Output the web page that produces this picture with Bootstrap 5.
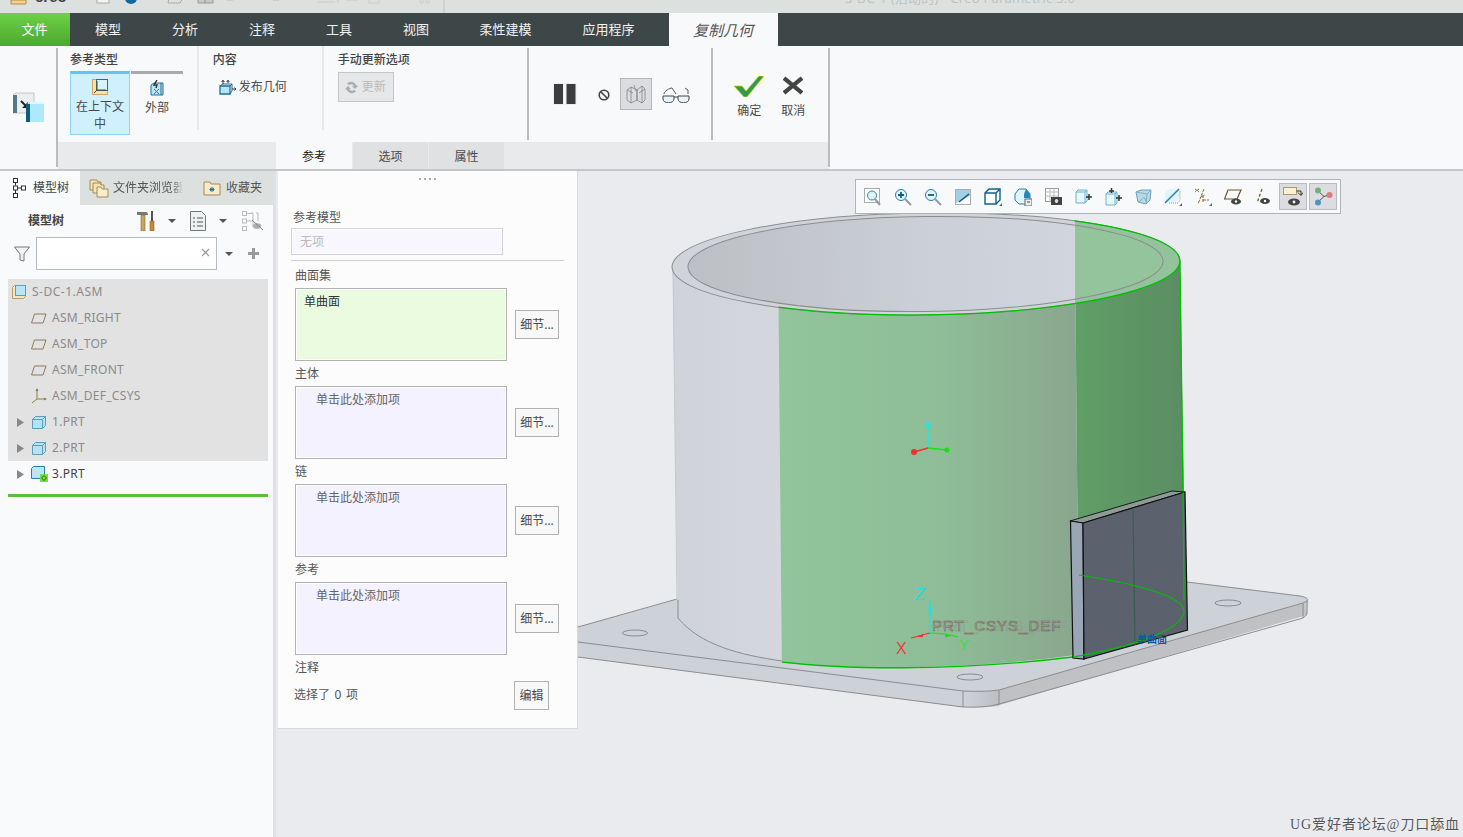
<!doctype html>
<html lang="zh">
<head>
<meta charset="utf-8">
<title>Creo</title>
<link rel="stylesheet" href="https://cdn.jsdelivr.net/npm/bootstrap@5.3.0/dist/css/bootstrap.min.css">
<style>
html,body{height:100%;}
body{width:1463px;height:837px;overflow:hidden;background:#e9ebef;font:12px/1.2 "Noto Sans","Noto Sans CJK SC",sans-serif;color:#4a4a4a;}
svg{display:block;flex:none;}
.titlebar{height:13px;background:#dce1e0;overflow:hidden;}
.tabstrip{height:33px;background:#3e4748;color:#f2f2f2;font-size:13px;}
.tb-item{width:77px;height:33px;display:flex;align-items:center;justify-content:center;padding:1px 1px 0 0;}
.tb-file{width:70px;background:linear-gradient(#6bd246,#4ea82f);color:#fff;}
.tb-w102{width:102px;}
.tb-w104{width:104px;margin-right:8px;}
.tb-ctx{width:109px;background:#f8f9fb;color:#555;font-style:italic;font-size:15px;}
.ribbon{height:125px;background:#f8f9fb;border-bottom:2px solid #c4c7c8;}
.rb-left{width:58px;margin-top:2px;margin-bottom:2px;border-right:2px solid #b9bdbe;padding:44px 0 0 13px;}
.rb-mid{width:771px;}
.rb-top{height:96px;}
.rb-bottom{height:27px;background:#e9eaec;padding-left:218px;}
.rb-right{width:2px;margin:2px 0 2px -1px;background:#b9bdbe;}
.rb-tab{width:75px;height:27px;margin-right:1px;background:#dfe1e3;display:flex;align-items:center;justify-content:center;padding-top:4px;}
.rb-tab-on{width:76px;background:#f8f9fb;color:#222;}
.grp{position:relative;height:96px;}
.grp-a{width:141px;padding:6px 0 0 12px;}
.grp-b{width:125px;padding:6px 0 0 14px;}
.grp-c{width:206px;padding:4px 0 0 14px;}
.grp-d{width:184px;padding:35px 0 0 24px;}
.grp-e{width:116px;padding:30px 0 0 21px;}
.sep-light{border-right:2px solid #e6e8ea;height:84px;}
.sep-dark{border-right:2px solid #b9bdbe;height:92px;margin-top:2px;}
.grp-title{font-weight:500;color:#444;height:17px;line-height:15px;white-space:nowrap;}
.rtype{height:64px;width:60px;margin-top:2px;text-align:center;border-top:3px solid #aaa;}
.rtype-on{background:#d0f0fe;border:1px solid #8fd3f5;border-top:3px solid #62c4f2;margin-right:1px;line-height:17px;padding-top:5px;}
.rtype-off{width:52px;padding-top:6px;line-height:17px;}
.rtype svg{margin:0 auto 3px;}
.pub{margin:11px 0 0 6px;gap:3px;}
.upd{margin-top:3px;width:56px;height:30px;background:#e6e7e9;border:1px solid #c4c6c8;color:#bbb;gap:3px;padding-left:5px;}
.act-btn{width:44px;text-align:center;}
.act-btn svg{margin:0 auto;}
.act-btn div{margin-top:7px;}
.press{width:32px;height:32px;background:#dcdde0;border:1px solid #b4b6b8;display:flex;align-items:center;justify-content:center;margin:-5px 11px 0 10px;}
.wsp{height:666px;}
.side{width:273px;background:#f8fafb;}
.side-edge{width:3px;background:#dfe1e4;}
.side-tabs{height:34px;background:#dce1e0;}
.st{height:34px;display:flex;align-items:center;white-space:nowrap;overflow:hidden;}
.st-on{width:80px;background:#f8fafb;padding-left:12px;gap:6px;}
.st-b{width:113px;padding-left:9px;gap:4px;color:#555;}
.st-c{width:80px;padding-left:10px;gap:5px;color:#555;}
.st-fade{width:70px;overflow:hidden;-webkit-mask-image:linear-gradient(90deg,#000 85%,transparent);mask-image:linear-gradient(90deg,#000 85%,transparent);}
.tool-row{height:32px;padding-left:28px;}
.filter-row{height:33px;padding-left:14px;}
.flt-wrap{position:relative;width:181px;height:33px;margin-left:6px;}
.flt-input{width:181px;height:33px;border:1px solid #b4bcbd;border-radius:0;background:#fff;padding:0;}
.flt-x{position:absolute;right:7px;top:11px;}
.tree{margin:9px 5px 0 8px;border-radius:0;width:260px;}
.tree-row{height:26px;border:0;border-radius:0!important;padding:0 0 0 9px;display:flex;align-items:center;background:#e2e2e2;color:#8a8a8a;letter-spacing:.3px;}
.tree-row.live{background:transparent;color:#444;}
.tree-arrow{width:15px;flex:none;display:flex;align-items:center;}
.tree-name{margin-left:6px;white-space:nowrap;}
.tree-kid{padding-left:23px;}
.tree-end{height:3px;margin:7px 5px 0 8px;width:260px;background:#5bbf3a;}
.pane{width:300px;height:558px;margin-left:2px;background:#fcfcfc;border-right:1px solid #d8d9da;border-bottom:1px solid #d8d9da;padding:0 0 0 17px;flex:none;}
.pane-dots{height:37px;padding:7px 0 0 124px;}
.pane-lab{height:18px;line-height:20px;color:#555;}
.pane-none{margin:2px 0 0 -4px;width:212px;height:27px;background:#f8f6fe;border:1px solid #d3d3d3;box-shadow:inset 0 0 0 1px #fff;color:#bbb;padding:0 8px;line-height:25px;}
.pane-rule{height:1px;background:#cfcfcf;margin:5px 13px 5px -4px;}
.coll-row{height:73px;}
.coll{width:212px;height:73px;border:1px solid #b2b2b2;box-shadow:inset 0 0 0 1px #fff;background:#f4f2ff;padding:6px 20px;color:#666;}
.coll-sel{background:#ebfbdf;padding-left:8px;color:#333;}
.dtl{width:44px;height:29px;margin-left:8px;border:1px solid #b2b2b2;border-radius:0;background:#f8f8f8;color:#4a4a4a;font-size:12px;padding:0;--bs-btn-hover-bg:#f8f8f8;}
.dtl-s{width:35px;}
.pane-gap{margin-top:3px;margin-bottom:4px;}
.pane-foot{margin-top:5px;height:29px;width:255px;}
.foot-text{width:220px;color:#555;margin-left:-1px;word-spacing:1.5px;}
.view{width:885px;height:666px;position:relative;overflow:hidden;}
.vtools{position:absolute;left:277px;top:8px;width:486px;height:35px;background:#f8f9fb;border:1px solid #afb4b6;padding-left:2px;}
.vt{width:30px;height:33px;display:flex;align-items:center;justify-content:center;}
.vt-on{width:28px;height:27px;margin-left:1px;margin-right:1px;background:#dcdde0;border:1px solid #bbb;}
.wmark{position:absolute;right:3px;bottom:3px;font-family:"Liberation Serif","Noto Sans CJK SC",serif;font-size:14px;letter-spacing:.9px;color:#555;white-space:nowrap;text-shadow:0 0 1px #fff;}
</style>
</head>
<body>
<div class="titlebar">
<svg width="1463" height="13" viewBox="0 0 1463 13">
<path d="M11 0h15v4h-15z" fill="#f3d28e" stroke="#b08a40"/>
<text x="35" y="2" font-family="Liberation Sans" font-size="15" font-weight="bold" fill="#444">creo</text>
<rect x="97" y="-6" width="12" height="9" fill="#f2f3f3" stroke="#aaa"/>
<circle cx="131" cy="-2" r="6" fill="#0f6aa0"/>
<path d="M169-2h14l-3 5h-12z" fill="none" stroke="#aaa"/>
<path d="M198-4h15v7h-15zM205-4v7" fill="#c8c8c8" stroke="#999"/>
<path d="M227 0h6l3-3M267 0l5-3M273 0h6" fill="none" stroke="#bbb"/>
<path d="M318 2h17M338-2v5" stroke="#ccc" fill="none"/>
<path d="M346-3h10l2 3h-12zM369-2h10v5h-10z" fill="none" stroke="#ccc"/>
<path d="M420-3h3v6h-3zM426-3h3v6h-3z" fill="#ddd" stroke="#ccc"/>
<path d="M444 0v13" stroke="#bfc4c4"/>
<text x="845" y="3" textLength="230" font-family="Noto Sans,Noto Sans CJK SC" font-size="13" fill="#bdc3c3">S-DC-1 (活动的) - Creo Parametric 3.0</text>
</svg>
</div>
<ul class="nav tabstrip flex-nowrap">
<li class="tb-item tb-file">文件</li><li class="tb-item">模型</li><li class="tb-item">分析</li><li class="tb-item">注释</li><li class="tb-item">工具</li><li class="tb-item">视图</li><li class="tb-item tb-w102">柔性建模</li><li class="tb-item tb-w104">应用程序</li><li class="tb-item tb-ctx">复制几何</li>
</ul>
<div class="ribbon d-flex">
<div class="rb-left">
<svg width="32" height="32" viewBox="0 0 32 32"><path d="M0 3l3-2h18v20H0z" fill="#eceef0" stroke="#c4c6c8"/><rect x="0" y="3" width="4" height="18" fill="#56788f"/><path d="M8 9l5 5" stroke="#222" stroke-width="2" fill="none"/><path d="M15 16H9l6-6z" fill="#222"/><path d="M14 12l3-2h14v20H14z" fill="#aee8fb"/><path d="M17 10h14v2H17z" fill="#dff7fe"/><rect x="13" y="12" width="4" height="18" fill="#0a5c85"/></svg>
</div>
<div class="rb-mid">
<div class="rb-top d-flex">
<div class="grp grp-a sep-light">
<div class="grp-title">参考类型</div>
<div class="d-flex">
<div class="rtype rtype-on"><svg width="16" height="16" viewBox="0 0 16 16"><rect x=".5" y=".5" width="15" height="15" fill="#fbe0a8" stroke="#c9a86a"/><rect x="4.500" y=".5" width="11" height="11" fill="#d8f4fd" stroke="#2a6f93"/><path d="M5 11V2M5 11h9M5 11l-3 3" stroke="#5c4a20" fill="none"/></svg>在上下文中</div>
<div class="rtype rtype-off"><svg width="14" height="16" viewBox="0 0 14 16"><path d="M1 5l3-2h9v12H1z" fill="#b8e4f4" stroke="#2a6f93"/><path d="M11 3v12" stroke="#2a6f93"/><path d="M7 0L4 5h3l-1 3" stroke="#333" fill="none" stroke-width="1.4"/><path d="M4 9l5 5M9 9l-5 5" stroke="#9a6a20"/></svg>外部</div>
</div>
</div>
<div class="grp grp-b sep-light">
<div class="grp-title">内容</div>
<div class="pub d-flex align-items-center"><svg width="17" height="15" viewBox="0 0 17 15"><path d="M1 6h10v8H1z" fill="#b4e6f8" stroke="#1f6f95" stroke-width="1.3"/><path d="M1 6l3-2h9l-2 2M13 4v7l-2 3" fill="none" stroke="#1f6f95"/><path d="M4 4V0M2.500 2L4 .5 5.500 2M9 3V0M7.500 2L9 .5 10.500 2M13 9h4M15.500 7.500L17 9l-1.500 1.500" stroke="#333" fill="none"/></svg>发布几何</div>
</div>
<div class="grp grp-c sep-dark">
<div class="grp-title">手动更新选项</div>
<div class="upd d-flex align-items-center"><svg width="15" height="13" viewBox="0 0 15 13"><path d="M1 8l3-3 3 3H5c1 2 4 2 5 1l2 1c-2 3-7 3-9-1zM14 5l-3 3-3-3h2c-1-2-4-2-5-1L3 3c2-3 7-3 9 1z" fill="#a9adaf"/></svg>更新</div>
</div>
<div class="grp grp-d sep-dark d-flex align-items-center">
<svg width="24" height="22" viewBox="0 0 24 22" class="align-self-start mt-0"><rect x=".5" y=".5" width="10" height="21" fill="#3d3d3d" stroke="#eee"/><rect x="13" y=".5" width="10" height="21" fill="#3d3d3d" stroke="#eee"/></svg>
<svg width="12" height="12" viewBox="0 0 12 12" class="align-self-start" style="margin-left:21px;margin-top:6px"><circle cx="6" cy="6" r="4.800" fill="none" stroke="#444" stroke-width="1.600"/><path d="M2.500 2.500l7 7" stroke="#444" stroke-width="1.600"/></svg>
<div class="press align-self-start"><svg width="20" height="20" viewBox="0 0 20 20" fill="none" stroke="#777" stroke-width=".7"><path d="M1 6l4-3 6 3v10l-6 3-4-3zM11 6l5-4 3 3v11l-3 3-5-3zM5 3v16M16 2v17M8 1l2 6M1 6l6 3M19 5l-6 4"/></svg></div>
<svg width="28" height="16" viewBox="0 0 28 16" class="align-self-start" style="margin-top:4px;margin-left:-1px"><path d="M2 7C2 4 8 1 10 1l4 6M26 7V3l-3-2" fill="none" stroke="#555"/><path d="M1 9h11v3c0 5-11 5-11 0zM16 9h11v3c0 5-11 5-11 0z" fill="#e6f3f8" stroke="#444"/><path d="M12 10h4" stroke="#444"/></svg>
</div>
<div class="grp grp-e d-flex">
<div class="act-btn" style="margin-left:-7px"><svg width="30" height="21" viewBox="0 0 30 21"><path d="M0 10h8l4 5L25 0h5L13 21h-3z" fill="#2e9a52" stroke="#d6d200" stroke-width=".8"/></svg><div>确定</div></div>
<div class="act-btn"><svg width="20" height="21" viewBox="0 0 20 21"><path d="M1 2l18 15M19 2L1 17" stroke="#444" stroke-width="4.200"/></svg><div>取消</div></div>
</div>
</div>
<div class="rb-bottom d-flex">
<div class="rb-tab rb-tab-on">参考</div><div class="rb-tab">选项</div><div class="rb-tab">属性</div>
</div>
</div>
<div class="rb-right"></div>
</div>
<div class="wsp d-flex">
<aside class="side">
<div class="side-tabs d-flex">
<div class="st st-on"><svg width="15" height="20" viewBox="0 0 15 20" fill="#fff" stroke="#333"><rect x="1.500" y=".5" width="4" height="4"/><rect x="1.500" y="8" width="4" height="4"/><rect x="1.500" y="15.500" width="4" height="4"/><rect x="9.500" y="8" width="4" height="4"/><path d="M3.500 4.500v3M3.500 12v3.500M5.500 10h4" fill="none"/></svg><span style="color:#444">模型树</span></div>
<div class="st st-b"><svg width="20" height="20" viewBox="0 0 20 20"><path d="M1 2h7l1 2h3v8H1z" fill="#f6e3b5" stroke="#a48a55"/><path d="M4 5h7l1 2h3v8H4z" fill="#f6e3b5" stroke="#a48a55"/><path d="M8 9h4l1 2h6v8H8z" fill="#faecc8" stroke="#a48a55"/></svg><span class="st-fade">文件夹浏览器</span></div>
<div class="st st-c"><svg width="18" height="16" viewBox="0 0 18 16"><path d="M1 2h6l1 2h9v11H1z" fill="#faecc8" stroke="#a48a55"/><path d="M9 7v5M6.500 9.500h5M7 8l4 3M11 8l-4 3" stroke="#1f6f95"/></svg><span>收藏夹</span></div>
</div>
<div class="tool-row d-flex align-items-center">
<span class="fw-bold" style="width:109px;color:#444">模型树</span>
<svg width="20" height="20" viewBox="0 0 20 20"><path d="M0 1h9c1 0 2 1 2 3H0z" fill="#777"/><rect x="4" y="4" width="4" height="16" fill="#c9a45f" stroke="#8a6a30" stroke-width=".6"/><rect x="14" y="0" width="2" height="10" fill="#555"/><rect x="13" y="10" width="4" height="10" fill="#c98a2f" stroke="#7a5a20" stroke-width=".5"/></svg>
<svg width="8" height="4" viewBox="0 0 8 4" style="margin-left:11px"><path d="M0 0h8L4 4z" fill="#555"/></svg>
<svg width="16" height="20" viewBox="0 0 16 20" style="margin-left:14px"><path d="M.5.5h11l4 4v15H.5z" fill="#eef1f2" stroke="#777"/><path d="M3 7h2M7 7h6M3 11h2M7 11h6M3 15h2M7 15h6" stroke="#555"/></svg>
<svg width="8" height="4" viewBox="0 0 8 4" style="margin-left:13px"><path d="M0 0h8L4 4z" fill="#555"/></svg>
<svg width="22" height="20" viewBox="0 0 22 20" style="margin-left:15px" fill="none" stroke="#bbb"><rect x=".5" y=".5" width="4" height="4"/><rect x=".5" y="8" width="4" height="4"/><rect x=".5" y="15.500" width="4" height="4"/><path d="M4 2.500h6M4 10h6M9 2h2v14M14 2h2v8"/><ellipse cx="15" cy="15" rx="4" ry="2.500" fill="#aaa"/><path d="M10 9l11 10" stroke="#888"/></svg>
</div>
<div class="filter-row d-flex align-items-center">
<svg width="16" height="16" viewBox="0 0 16 16"><path d="M.5 1h15L10 8v7l-4-1V8z" fill="#f1f3f3" stroke="#777"/></svg>
<div class="flt-wrap"><input class="form-control flt-input" type="text" aria-label="filter"><svg class="flt-x" width="9" height="9" viewBox="0 0 9 9"><path d="M1 1l7 7M8 1L1 8" stroke="#999" stroke-width="1.200"/></svg></div>
<svg width="8" height="4" viewBox="0 0 8 4" style="margin-left:8px"><path d="M0 0h8L4 4z" fill="#555"/></svg>
<svg width="11" height="11" viewBox="0 0 11 11" style="margin-left:15px"><path d="M4 0h3v4h4v3H7v4H4V7H0V4h4z" fill="#999"/></svg>
</div>
<div class="list-group tree">
<div class="list-group-item tree-row" style="padding-left:4px"><svg width="14" height="14" viewBox="0 0 14 14"><path d="M.5 2.500l2-2h11v11l-2 2H.5z" fill="#f6e6c2" stroke="#b59c68"/><rect x="3.500" y=".5" width="10" height="10" fill="#b9e6f7" stroke="#5b9dbb"/></svg><span class="tree-name" style="letter-spacing:.5px">S-DC-1.ASM</span></div>
<div class="list-group-item tree-row tree-kid"><svg width="16" height="11" viewBox="0 0 16 11"><path d="M3.500 1H15l-3 9H.5z" fill="none" stroke="#8f7b5a"/></svg><span class="tree-name" style="margin-left:5px">ASM_RIGHT</span></div>
<div class="list-group-item tree-row tree-kid"><svg width="16" height="11" viewBox="0 0 16 11"><path d="M3.500 1H15l-3 9H.5z" fill="none" stroke="#8f7b5a"/></svg><span class="tree-name" style="margin-left:5px">ASM_TOP</span></div>
<div class="list-group-item tree-row tree-kid"><svg width="16" height="11" viewBox="0 0 16 11"><path d="M3.500 1H15l-3 9H.5z" fill="none" stroke="#8f7b5a"/></svg><span class="tree-name" style="margin-left:5px">ASM_FRONT</span></div>
<div class="list-group-item tree-row tree-kid"><svg width="16" height="16" viewBox="0 0 16 16"><path d="M6 1v10M6 11h9M6 11l-5 4" stroke="#8f7b5a" fill="none"/><path d="M6 0L4.500 3h3zM16 11l-3-1.500v3z" fill="#8f7b5a"/></svg><span class="tree-name" style="margin-left:5px">ASM_DEF_CSYS</span></div>
<div class="list-group-item tree-row"><div class="tree-arrow"><svg width="7" height="9" viewBox="0 0 7 9"><path d="M0 0l7 4.500L0 9z" fill="#888"/></svg></div><svg width="14" height="13" viewBox="0 0 14 13"><path d="M.5 3.500l3-3h10v9l-3 3H.5z" fill="#b5e3f5" stroke="#5b9dbb"/><path d="M.5 3.500h10v9M10.500 3.500l3-3" fill="none" stroke="#5b9dbb"/></svg><span class="tree-name">1.PRT</span></div>
<div class="list-group-item tree-row"><div class="tree-arrow"><svg width="7" height="9" viewBox="0 0 7 9"><path d="M0 0l7 4.500L0 9z" fill="#888"/></svg></div><svg width="14" height="13" viewBox="0 0 14 13"><path d="M.5 3.500l3-3h10v9l-3 3H.5z" fill="#b5e3f5" stroke="#5b9dbb"/><path d="M.5 3.500h10v9M10.500 3.500l3-3" fill="none" stroke="#5b9dbb"/></svg><span class="tree-name">2.PRT</span></div>
<div class="list-group-item tree-row live"><div class="tree-arrow"><svg width="7" height="9" viewBox="0 0 7 9"><path d="M0 0l7 4.500L0 9z" fill="#888"/></svg></div><svg width="17" height="16" viewBox="0 0 17 16" style="margin-left:-1px;margin-right:-2px"><path d="M.5 2.500l2-2h11v10l-2 2H.5z" fill="#b5e8fb" stroke="#2a7fa8"/><rect x="9" y="8" width="8" height="8" fill="#7ddb3f"/><path d="M13 9.500l2.500 2.500-2.500 2.500-2.500-2.500z" fill="none" stroke="#1d6b1d"/></svg><span class="tree-name">3.PRT</span></div>
</div>
<div class="tree-end"></div>
</aside>
<div class="side-edge"></div>
<section class="pane">
<div class="pane-dots"><svg width="17" height="2" viewBox="0 0 17 2"><path d="M0 0h2v2H0zM5 0h2v2H5zM10 0h2v2h-2zM15 0h2v2h-2z" fill="#aaa"/></svg></div>
<div class="pane-lab" style="margin-left:-2px">参考模型</div>
<div class="pane-none">无项</div>
<div class="pane-rule"></div>
<div class="pane-lab" style="margin-bottom:4px">曲面集</div>
<div class="coll-row d-flex align-items-center"><div class="coll coll-sel">单曲面</div><button class="btn dtl" type="button">细节...</button></div>
<div class="pane-lab pane-gap">主体</div>
<div class="coll-row d-flex align-items-center"><div class="coll">单击此处添加项</div><button class="btn dtl" type="button">细节...</button></div>
<div class="pane-lab pane-gap">链</div>
<div class="coll-row d-flex align-items-center"><div class="coll">单击此处添加项</div><button class="btn dtl" type="button">细节...</button></div>
<div class="pane-lab pane-gap">参考</div>
<div class="coll-row d-flex align-items-center"><div class="coll">单击此处添加项</div><button class="btn dtl" type="button">细节...</button></div>
<div class="pane-lab pane-gap" style="margin-bottom:0">注释</div>
<div class="pane-foot d-flex align-items-center"><span class="foot-text">选择了 0 项</span><button class="btn dtl dtl-s m-0" type="button">编辑</button></div>
</section>
<div class="view">
<svg width="885" height="666" viewBox="578 171 885 666">
<defs>
<linearGradient id="gGrey" x1="0" x2="1" y1="0" y2="0"><stop offset="0" stop-color="#cfd2d9"/><stop offset="1" stop-color="#d4d7de"/></linearGradient>
<linearGradient id="gGreen" x1="0" x2="1" y1="0" y2="0"><stop offset="0" stop-color="#91c59a"/><stop offset=".55" stop-color="#8ebd97"/><stop offset="1" stop-color="#89a68e"/></linearGradient>
<linearGradient id="gDark" x1="0" x2="1" y1="0" y2="0"><stop offset="0" stop-color="#5f9f66"/><stop offset="1" stop-color="#5b8a62"/></linearGradient>
<linearGradient id="gIn" x1="0" x2="1" y1="0" y2="0"><stop offset="0" stop-color="#bcbfc3"/><stop offset=".5" stop-color="#cbcfd7"/><stop offset="1" stop-color="#d5d8e0"/></linearGradient>
<linearGradient id="gCorner" x1="0" x2="1" y1="0" y2="0"><stop offset="0" stop-color="#cfd2d9"/><stop offset="1" stop-color="#bcbec2"/></linearGradient>
<clipPath id="cBody"><path d="M672.500 265L678 622C700 645 740 655 782 661C840 669 950 672 1075 655L1186 620L1180 262z"/></clipPath>
<clipPath id="cOut"><ellipse cx="926" cy="264" rx="254" ry="51" transform="rotate(-.7 926 264)"/></clipPath>
<clipPath id="cInR"><ellipse cx="925.500" cy="264" rx="237.500" ry="47.500" transform="rotate(-.7 925.500 264)"/></clipPath>
</defs>
<!-- plate -->
<path d="M578 627L700 593L1187 582L1300 596Q1310 598 1308 603L1307 614L999 705L963 707L578 657z" fill="#cdd1d8"/>
<path d="M999 690L1304 603L1307 615L999 705z" fill="#bfc1c4"/>
<path d="M963 691Q985 692 999 690V706Q985 708 963 707z" fill="url(#gCorner)"/>
<g fill="none" stroke="#8c8c8c">
<path d="M578 627L677 599M1187 582L1300 596Q1310 598 1307 601Q1306 602 1303 603L999 690Q985 692 963 691L578 642"/>
<path d="M578 657L963 707Q985 708 999 704L1303 618Q1306 616 1307 614V601M963 691V707M999 690V705M1303 603V618"/>
<ellipse cx="635" cy="633" rx="12.500" ry="3"/><ellipse cx="970" cy="677" rx="13" ry="3"/><ellipse cx="1228" cy="603" rx="13" ry="3"/>
</g>
<!-- cylinder body -->
<g clip-path="url(#cBody)">
<rect x="670" y="250" width="112" height="430" fill="url(#gGrey)"/>
<path d="M778 250L782 680H1079L1075 250z" fill="url(#gGreen)"/>
<path d="M1075 250L1079 680H1200V250z" fill="url(#gDark)"/>
</g>
<path d="M678 600V618C700 645 740 655 782 661" fill="none" stroke="#8c8c8c"/>
<path d="M673 266L677 600" stroke="#c4c7cc"/>
<!-- top -->
<g clip-path="url(#cOut)">
<rect x="670" y="210" width="405" height="110" fill="#d0d3da"/>
<rect x="1075" y="210" width="110" height="110" fill="#92c39b"/>
</g>
<ellipse cx="925.500" cy="264" rx="237.500" ry="47.500" transform="rotate(-.7 925.500 264)" fill="url(#gIn)"/>
<path d="M1075 210H1185V320H1075z" fill="#93c49c" clip-path="url(#cInR)"/>
<g fill="none" stroke="#8c8c8c">
<ellipse cx="926" cy="264" rx="254" ry="51" transform="rotate(-.7 926 264)"/>
<ellipse cx="925.500" cy="264" rx="237.500" ry="47.500" transform="rotate(-.7 925.500 264)"/>
</g>
<g transform="rotate(-.7 926 264)" fill="none" stroke="#00c000" stroke-width="1.300">
<path d="M778 305.400A254 51 0 0 0 1180 264A254 51 0 0 0 1075 222.600"/>
</g>
<path d="M1180 262L1183 492" stroke="#00c000" stroke-width="1.300"/>
<path d="M782 662C840 669 950 672 1073 657" fill="none" stroke="#00c000" stroke-width="1.300"/>
<!-- bracket -->
<path d="M1070 521L1172 491L1185 492L1083 523z" fill="#8c9c94" stroke="#1a1a1a"/>
<path d="M1070.500 521L1083 523L1084 659L1073 658z" fill="#9aa6b6" stroke="#111" stroke-width="1.200"/>
<path d="M1083 523L1185 492L1187.500 630L1084 659z" fill="#5b626d" stroke="#111" stroke-width="1.200"/>
<path d="M1133 508L1135 645" stroke="#3e5a52" stroke-width="1.200"/>
<path d="M1079 575C1125 582 1186 595 1184 612C1181 632 1125 648 1073 657" fill="none" stroke="#00c000" stroke-width="1.200"/>
<path d="M1183 492L1184 600" stroke="#00c000" stroke-width="1.200"/>
<text x="1137" y="643" font-family="Noto Sans CJK SC" font-size="10" font-weight="700" fill="#0c5aa2">单曲面</text>
<!-- csys -->
<path d="M928 448V426" stroke="#1fe6e6" stroke-width="1.500"/><circle cx="928" cy="425" r="2.500" fill="#1fe6e6"/>
<path d="M928 448L914 452" stroke="#ee3030" stroke-width="1.500"/><circle cx="914" cy="452" r="3" fill="#ee3030"/>
<path d="M928 448L947 450" stroke="#18e018" stroke-width="1.300"/><circle cx="947" cy="450" r="2.500" fill="#18e018"/>
<path d="M930 633V600" stroke="#22e0e0" stroke-width="1.200"/><path d="M928.500 606h3v8h-3z" fill="#22e0e0"/>
<path d="M930 633L911 638" stroke="#ee3030" stroke-width="1.200"/><path d="M917 637l6-3v3z" fill="#ee3030"/>
<path d="M930 633Q945 633 958 637" fill="none" stroke="#18e018" stroke-width="1.200"/><path d="M945 634l7 2-7 1z" fill="#18e018"/>
<text x="915" y="600" font-family="Liberation Sans" font-size="16" font-style="italic" fill="#27dcdc">Z</text>
<text x="896" y="654" font-family="Liberation Sans" font-size="16" fill="#e84040">X</text>
<text x="959" y="650" font-family="Liberation Sans" font-size="15" fill="#46d846">Y</text>
<text x="936" y="631" textLength="132" lengthAdjust="spacing" font-family="Liberation Sans" font-size="15" letter-spacing="1.500" fill="none" stroke="#8d9c90" stroke-width=".5">PRT_CSYS_DEF</text>
<text x="932" y="631" textLength="130" lengthAdjust="spacing" font-family="Liberation Sans" font-size="15" letter-spacing="1.500" fill="none" stroke="#80585c" stroke-width=".5">PRT_CSYS_DEF</text>
</svg>
<div class="vtools d-flex align-items-center">
<div class="vt"><svg width="18" height="18" viewBox="0 0 18 18"><rect x=".5" y=".5" width="15" height="14" fill="#fff" stroke="#a8adb0"/><circle cx="8" cy="7.500" r="4.500" fill="#dff4fb" stroke="#2a7fa8"/><path d="M11 11l5 6" stroke="#999" stroke-width="2"/></svg></div>
<div class="vt"><svg width="18" height="18" viewBox="0 0 18 18"><circle cx="7" cy="7" r="5.500" fill="#dff4fb" stroke="#2a7fa8"/><path d="M4 7h6M7 4v6" stroke="#0f5f88" stroke-width="1.800"/><path d="M11 11l6 6" stroke="#999" stroke-width="2"/></svg></div>
<div class="vt"><svg width="18" height="18" viewBox="0 0 18 18"><circle cx="7" cy="7" r="5.500" fill="#dff4fb" stroke="#2a7fa8"/><path d="M4 7h6" stroke="#0f5f88" stroke-width="1.800"/><path d="M11 11l6 6" stroke="#999" stroke-width="2"/></svg></div>
<div class="vt"><svg width="16" height="16" viewBox="0 0 16 16"><rect x=".5" y=".5" width="15" height="15" fill="#fff" stroke="#a8adb0"/><path d="M1 1h14v6L1 14z" fill="#9fd0e4"/><path d="M4 13L14 5" stroke="#104f75" stroke-width="1.500"/></svg></div>
<div class="vt"><svg width="18" height="18" viewBox="0 0 18 18"><path d="M1 5l4-4h11v11l-4 4H1z" fill="#fff" stroke="#0f5f88" stroke-width="1.400"/><path d="M1 5h11v11M12 5l4-4" fill="none" stroke="#0f5f88" stroke-width="1.400"/><path d="M18 15v3h-3z" fill="#666"/></svg></div>
<div class="vt"><svg width="18" height="18" viewBox="0 0 18 18"><path d="M1 6l4-5h7l4 5v6l-5 4H5l-4-4z" fill="#dff4fb" stroke="#2a7fa8"/><path d="M12 1l4 5v4h-6V6z" fill="#2a88b8"/><rect x="11" y="11" width="7" height="7" fill="#eee" stroke="#666"/><path d="M13 14h3" stroke="#444"/></svg></div>
<div class="vt"><svg width="17" height="17" viewBox="0 0 17 17"><rect x=".5" y=".5" width="13" height="13" fill="#fff" stroke="#999"/><path d="M.5 4h13M.5 8h13M5 .5v13M9 .5v13" stroke="#bbb" fill="none"/><rect x="6" y="9" width="11" height="8" fill="#444"/><circle cx="11.500" cy="13" r="2.500" fill="#ddd" stroke="#222"/></svg></div>
<div class="vt"><svg width="17" height="15" viewBox="0 0 17 15"><path d="M1 3l2-2h9v11l-2 2H1z" fill="#e8f7fc" stroke="#6ab2cf"/><path d="M1 3h9v11M10 3l2-2" fill="none" stroke="#6ab2cf"/><path d="M11 8h6M14 5v6" stroke="#333" stroke-width="1.500"/></svg></div>
<div class="vt"><svg width="17" height="18" viewBox="0 0 17 18"><path d="M1 6l2-2h9v11l-2 2H1z" fill="#e8f7fc" stroke="#6ab2cf"/><path d="M1 6h9v11M10 6l2-2" fill="none" stroke="#6ab2cf"/><path d="M4 3h5M6.500 0v5M11 10h6M14 7v6" stroke="#333" stroke-width="1.500"/></svg></div>
<div class="vt"><svg width="17" height="16" viewBox="0 0 17 16"><path d="M1 3l5-2h10l-1 10-4 4-8-2z" fill="#b8d9e6" stroke="#6f9fb4"/><path d="M1 3l11 2 4-4M12 5l-1 10M4 13l5-5 3 6" fill="none" stroke="#7fb1c5"/></svg></div>
<div class="vt"><svg width="18" height="18" viewBox="0 0 18 18"><path d="M1 13V5l4-4h11v8l-4 5H1z" fill="#dff3fa"/><path d="M1 15L15 1" stroke="#2a7fa8" stroke-width="1.400"/><path d="M5 15h9l2-3V3" stroke="#999" stroke-dasharray="1 1" fill="none"/><path d="M18 15v3h-3z" fill="#666"/></svg></div>
<div class="vt"><svg width="18" height="18" viewBox="0 0 18 18"><path d="M1 1l4 3M5 1L1 4M10 1l-6 15M9 14V7M9 12h6M7 9l4-2" stroke="#8a6a20" fill="none" stroke-dasharray="3 1"/><path d="M18 15v3h-3z" fill="#666"/></svg></div>
<div class="vt"><svg width="18" height="16" viewBox="0 0 18 16"><path d="M4 1h13l-4 9H.5z" fill="none" stroke="#6d5522" stroke-width="1.200"/><ellipse cx="12" cy="12.500" rx="5" ry="3" fill="#444"/><circle cx="12" cy="12.500" r="1.200" fill="#fff"/></svg></div>
<div class="vt"><svg width="16" height="16" viewBox="0 0 16 16"><path d="M7 0L2 14" stroke="#7a5c22" stroke-width="1.300" stroke-dasharray="3 2"/><ellipse cx="10" cy="12" rx="5" ry="3" fill="#444"/><circle cx="10" cy="12" r="1.200" fill="#fff"/></svg></div>
<div class="vt vt-on"><svg width="20" height="19" viewBox="0 0 20 19"><rect x=".5" y=".5" width="13" height="7" fill="#fbf0d4" stroke="#a99a70"/><path d="M13.500 4H18v4M15 5.500l3 3 2-3" fill="none" stroke="#333"/><ellipse cx="11" cy="15" rx="6" ry="3.500" fill="#444"/><circle cx="11" cy="15" r="1.400" fill="#fff"/></svg></div>
<div class="vt vt-on"><svg width="19" height="19" viewBox="0 0 19 19"><path d="M4 4l6 5.500L16 7.500M10 9.500L4 15" stroke="#555" fill="none"/><circle cx="4" cy="3.500" r="3" fill="#73b273"/><circle cx="15.500" cy="8" r="3" fill="#e07a7a"/><circle cx="4" cy="15.500" r="3" fill="#4f93bd"/></svg></div>
</div>
<div class="wmark">UG爱好者论坛@刀口舔血</div>
</div>
</div>
</body>
</html>
